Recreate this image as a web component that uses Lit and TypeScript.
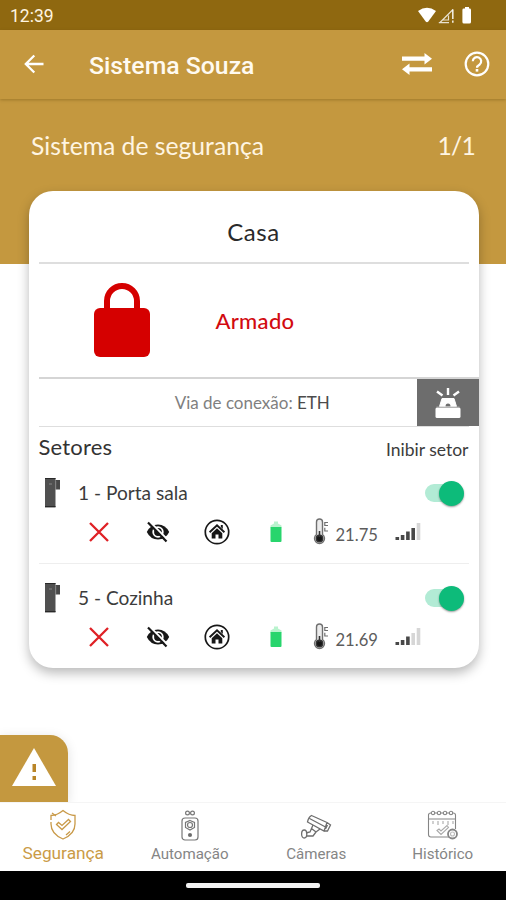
import { LitElement, html, css, svg } from "lit";
import { customElement, property } from "lit/decorators.js";

interface Sector {
  name: string;
  temperature: string;
  signal: number;
}

const SECTORS: Sector[] = [
  { name: "1 - Porta sala", temperature: "21.75", signal: 4 },
  { name: "5 - Cozinha", temperature: "21.69", signal: 3 },
];

@customElement("status-bar")
class StatusBar extends LitElement {
  static styles = css`
    :host { display: flex; height: 30px; box-sizing: border-box; background: #8f6810; color: #fff5e0;
      align-items: center; justify-content: space-between; padding: 0 32px 0 10px;
      font: 400 17.5px/30px Roboto, sans-serif; }
    .time { padding-top: 2px; }
    svg { display: block; }
  `;
  render() {
    return html`<span class="time">12:39</span>
      <svg width="56" height="18" viewBox="0 0 56 18" fill="#fff">
        <path d="M0 5Q9-1.500 18 5L10.300 15.500Q9 17 7.700 15.500Z"/>
        <path d="M22 16.500L35 3.500M20.800 16.700H31M25 14H30.500V9.500" fill="none" stroke="#fff" stroke-opacity=".8" stroke-width="1.200"/>
        <path d="M34 3.500H35.600V13H34zM34 14.500H35.600V16.700H34z" fill-opacity=".85"/>
        <path d="M47 1h4v1.500h.600q1.400 0 1.400 1.400v12q0 1.600-1.600 1.600h-5.400q-1.600 0-1.600-1.600V3.900q0-1.400 1.400-1.400h1.200z"/>
      </svg>`;
  }
}

@customElement("title-bar")
class TitleBar extends LitElement {
  static styles = css`
    :host { display: flex; height: 69px; box-sizing: border-box; align-items: center; background: #c4983f;
      color: #fffaf0; padding: 0 16px 0 23px; box-shadow: 0 1px 3px rgba(90, 60, 0, 0.35); z-index: 1; position: relative; }
    .title { flex: 1; margin: 2px 0 0 44px; font: 500 24.800px/30px Roboto, sans-serif; }
    .help { margin-left: 31px; }
    svg { display: block; margin-top: -1px; }
  `;
  render() {
    return html`
      <svg width="22" height="22" viewBox="0 0 22 22" fill="none" stroke="#fff" stroke-width="2.300">
        <path d="M20.500 11H3M11.300 2.500L2.800 11l8.500 8.500"/>
      </svg>
      <span class="title">Sistema Souza</span>
      <svg width="32" height="24" viewBox="0 0 32 24" fill="#fff">
        <path d="M1 4.500H23.500V1L31 6.700L23.500 12.500V8.800H1z"/>
        <path d="M31 15.200H8.500V11.500L1 17.300L8.500 23V19.500H31z"/>
      </svg>
      <svg class="help" width="26" height="26" viewBox="0 0 26 26" fill="none" stroke="#fff" stroke-width="2.200">
        <circle cx="13" cy="13" r="11.300"/>
        <path d="M8.800 10.300a4.200 4.200 0 1 1 6.900 3.200q-2.700 1.700-2.700 3.200"/>
        <path d="M13 18v2.600" stroke-width="2.600"/>
      </svg>`;
  }
}

@customElement("sector-row")
class SectorRow extends LitElement {
  @property({ attribute: false }) sector: Sector = SECTORS[0];

  static styles = css`
    :host { display: block; height: 96px; padding-top: 9px; box-sizing: border-box; }
    .head { display: flex; height: 36px; align-items: center; padding: 0 14.500px 0 16.500px; }
    .name { flex: 1; margin-left: 17px; font: 400 19.100px/36px Lato, sans-serif; color: #3c3c3c; }
    .switch { position: relative; width: 39px; height: 26px; display: flex; align-items: center; }
    .track { width: 32px; height: 18px; border-radius: 9px; background: #b2ebd5; }
    .thumb { position: absolute; right: 0; top: 0.5px; width: 25px; height: 25px; border-radius: 50%;
      background: #0dbb7a; box-shadow: 0 1px 2px rgba(0, 0, 0, 0.4); }
    .info { display: grid; height: 42px; grid-template-columns: 59px 59px 59px 59px 23px 66px 30px;
      padding-left: 41px; align-items: center; justify-items: center; }
    .temp { justify-self: start; margin: 5px 0 0 7px; font: 400 16.600px/30px Lato, sans-serif; color: #5c5c5c; }
    .thermo { justify-self: end; }
    .signal { justify-self: start; }
    svg { display: block; }
  `;
  render() {
    const bars = [0, 1, 2, 3, 4];
    return html`
      <div class="head">
        <svg width="16" height="30" viewBox="0 0 16 30">
          <path d="M0 0h10.500v29.500H0z" fill="#505050"/>
          <path d="M10.500 2h4.500v9.500h-4.500z" fill="#484848"/>
          <path d="M0 .5h10.500M0 28.500h10.500" stroke="#292929"/>
          <path d="M4 6h3M10.700 3v8" stroke="#858585"/>
        </svg>
        <span class="name">${this.sector.name}</span>
        <span class="switch"><span class="track"></span><span class="thumb"></span></span>
      </div>
      <div class="info">
        <svg width="20" height="20" viewBox="0 0 20 20" fill="none" stroke="#df2025" stroke-width="2.300">
          <path d="M1 1l18 18M19 1L1 19"/>
        </svg>
        <svg width="24" height="22" viewBox="0 0 24 22">
          <path d="M.8 11Q4.500 3.500 12 3.500T23.200 11Q19.500 18.500 12 18.500T.8 11z" fill="#171717"/>
          <circle cx="12" cy="11" r="4.800" fill="none" stroke="#fff" stroke-width="1.800"/>
          <path d="M3.700.7L22 19" stroke="#fff" stroke-width="2"/>
          <path d="M2 1.500L20.500 20.500" stroke="#171717" stroke-width="2.200"/>
        </svg>
        <svg width="26" height="26" viewBox="0 0 26 26">
          <circle cx="13" cy="13" r="11.700" fill="none" stroke="#171717" stroke-width="1.700"/>
          <path d="M5.600 13.300L13 6.200l7.400 7.100" fill="none" stroke="#171717" stroke-width="1.900"/>
          <path d="M16.800 6h2v4l-2-2z" fill="#171717"/>
          <path d="M7.700 14.300L13 9.300l5.300 5V19.600h-3.800v-4h-3v4H7.700z" fill="#171717"/>
        </svg>
        <svg width="12" height="22" viewBox="0 0 12 22">
          <path d="M4 .5h4v2l3.500 2V6.500H.5V4.500L4 2.500z" fill="#b9f3ce"/>
          <path d="M.5 6h11v14q0 1-1 1h-9q-1 0-1-1z" fill="#28d56d"/>
        </svg>
        <svg class="thermo" width="16" height="28" viewBox="0 0 16 28" fill="none" stroke="#707070" stroke-width="1.400">
          <path d="M3.500 16.500V4a3 3 0 0 1 6 0V16.500a5 5 0 1 1-6 0z" fill="#ececec"/>
          <circle cx="6.500" cy="20.500" r="3.200" fill="#151515" stroke="#333"/>
          <path d="M6.500 13v6" stroke="#333" stroke-width="1.600"/>
          <path d="M15 4.500h-3.200v3H15M11.800 9.800V13H15" stroke-width="1.200"/>
        </svg>
        <span class="temp">${this.sector.temperature}</span>
        <svg class="signal" width="26" height="20" viewBox="0 0 26 20">
          ${bars.map((i) => svg`<rect x=${i * 5.3 + 0.5} y=${[15, 13, 9.5, 6, 1][i]} width="3.600"
            height=${[3, 5, 8.5, 12, 17][i]} fill=${i < this.sector.signal ? "#484848" : "#d6d6d6"}></rect>`)}
        </svg>
      </div>`;
  }
}

@customElement("security-card")
class SecurityCard extends LitElement {
  static styles = css`
    :host { display: block; box-sizing: border-box; height: 477px; margin: 0 27.500px 0 28.500px; background: #fff;
      border-radius: 24px; box-shadow: 0 5px 12px rgba(0, 0, 0, 0.28); font-family: Lato, sans-serif; }
    .title { height: 71px; margin: 0 10px; border-bottom: 2px solid #dedede; text-align: center;
      font-size: 24px; line-height: 82px; letter-spacing: 0.6px; color: #2a2a2a; }
    .state { height: 113px; display: grid; grid-template-columns: 187px 1fr; align-items: center; }
    .lock { justify-self: center; margin-top: -1px; }
    .armed { font-size: 22px; font-weight: 500; letter-spacing: 0.3px; color: #d20a10; margin-top: -1px; }
    .link { height: 47px; margin-left: 10px; border-top: 2px solid #d5d5d5; display: flex; position: relative; }
    .via { flex: 1; text-align: center; font-size: 17px; line-height: 48px; color: #808080; padding-left: 49px; }
    .eth { color: #4c4c4c; }
    .siren { width: 61.500px; background: #6d6d6d; display: grid; place-items: center; }
    .heading { height: 39px; margin: 0 10px; border-top: 1px solid #dedede; display: flex;
      justify-content: space-between; color: #3c3c3c; }
    .sectors { font-size: 22px; line-height: 39px; letter-spacing: 0.2px; color: #333; }
    .inhibit { font-size: 17.500px; line-height: 45px; }
    .divider { height: 1px; margin: 1px 10px 7px; background: #eee; }
    svg { display: block; }
  `;
  render() {
    return html`
      <div class="title">Casa</div>
      <div class="state">
        <svg class="lock" width="58" height="76" viewBox="0 0 58 76">
          <path d="M14 28V19a15 15 0 0 1 30 0v9" fill="none" stroke="#d50000" stroke-width="6"/>
          <rect x="1" y="26" width="56" height="49" rx="6" fill="#d50000"/>
        </svg>
        <span class="armed">Armado</span>
      </div>
      <div class="link">
        <span class="via">Via de conexão: <span class="eth">ETH</span></span>
        <span class="siren">
          <svg width="28" height="32" viewBox="0 0 28 32">
            <path d="M14 1v7M3 4.500l5.500 4M25 4.500l-5.500 4" stroke="#fff" stroke-width="2.400"/>
            <path d="M8 11.500h12l2.500 8h-17z" fill="#fff" stroke="#fff" stroke-width="1" stroke-linejoin="round"/>
            <rect x="1.500" y="20.500" width="25" height="10.500" rx="1.500" fill="#fff"/>
            <path d="M11.500 19.500q0-3 2.500-3t2.500 3z" fill="#6d6d6d"/>
            <path d="M2.500 20H25.500" stroke="#b5b5b5" stroke-width=".8"/>
          </svg>
        </span>
      </div>
      <div class="heading"><span class="sectors">Setores</span><span class="inhibit">Inibir setor</span></div>
      <sector-row .sector=${SECTORS[0]}></sector-row>
      <div class="divider"></div>
      <sector-row .sector=${SECTORS[1]}></sector-row>`;
  }
}

@customElement("bottom-tabs")
class BottomTabs extends LitElement {
  static styles = css`
    :host { display: grid; grid-template-columns: repeat(4, 1fr); height: 69px; box-sizing: border-box; background: #fff;
      border-top: 1px solid #f5f5f5; font: 400 15.100px/20px Roboto, sans-serif; color: #858585; }
    .tab { display: flex; flex-direction: column; align-items: center; padding-top: 6px; }
    .tab svg { display: block; height: 32px; }
    .label { margin-top: 3px; }
    .active .label { font-size: 17.300px; color: #ca9b47; margin-top: 2px; }
  `;
  render() {
    return html`
      <div class="tab active">
        <svg width="28" height="32" viewBox="0 0 28 32" fill="none" stroke="#c99a49" stroke-width="1.300">
          <path d="M2 11V6.500Q8 6.500 14 1.500Q20 6.500 26 6.500V15Q26 25 14 30Q2 25 2 15V13"/>
          <path d="M17 26l4-3.500M3 4l4 3" />
          <path d="M7.500 15.500l2-2 3.500 3 6.500-6 2 2-8.500 8z"/>
        </svg><span class="label">Segurança</span>
      </div>
      <div class="tab">
        <svg width="20" height="32" viewBox="0 0 20 32" fill="none" stroke="#777" stroke-width="1.200">
          <circle cx="7.500" cy="4" r="1.900"/><circle cx="12.500" cy="4" r="1.900"/>
          <rect x="2" y="9" width="16" height="22" rx="3"/>
          <path d="M10 11.500l4.500 2v5L10 21l-4.500-2.500v-5z"/>
          <circle cx="10" cy="16" r="2.500"/><circle cx="10" cy="26" r="1.500" fill="#666"/>
        </svg><span class="label">Automação</span>
      </div>
      <div class="tab">
        <svg width="32" height="32" viewBox="0 0 32 32" fill="none" stroke="#6e6e6e" stroke-width="1.300">
          <path d="M11.500 6.500L27 13.500 24 22 7.500 13q1-5 4-6.500zM9.500 9.500l16 8.500M27 13.500l3.500 2.500-3 6-3.500 0M27.500 16l-2 4"/>
          <path d="M13 16l-1.500 3.500 4.500 3.500 4-3M11.500 19.500L10 23l-4 1M16 23l-3 4H6"/>
          <ellipse cx="4.200" cy="25" rx="2.600" ry="4"/>
        </svg><span class="label">Câmeras</span>
      </div>
      <div class="tab">
        <svg width="32" height="32" viewBox="0 0 32 32" fill="none" stroke="#858585" stroke-width="1.100">
          <path d="M22 28H4q-2.500 0-2.500-2.500V6Q1.500 4 4 4H26q2.500 0 2.500 2V20M1.500 10H28.500" />
          <path d="M6 12v3M11 12v4M16 12v3M21 12v4M26 12v3" stroke="#aaa"/>
          <g fill="#fff"><circle cx="6" cy="4" r="1.700"/><circle cx="12" cy="4" r="1.700"/><circle cx="18" cy="4" r="1.700"/><circle cx="24" cy="4" r="1.700"/></g>
          <path d="M10 21.500l2-1.500 2 2 6-5.500 1.500 2-7.500 7z" stroke="#aaa"/>
          <circle cx="25.500" cy="25" r="4.500" stroke-width="1.800" fill="#fff"/><circle cx="25.500" cy="25" r="2" stroke="#bbb"/>
        </svg><span class="label">Histórico</span>
      </div>`;
  }
}

@customElement("app-root")
class AppRoot extends LitElement {
  static styles = css`
    :host { display: flex; flex-direction: column; width: 506px; height: 900px; overflow: hidden; background: #fff; }
    .page { flex: 1; background: linear-gradient(#c4983f 165px, #fff 165px); display: flex; flex-direction: column; }
    .hero { height: 92px; display: flex; box-sizing: border-box; justify-content: space-between; padding: 0 31px;
      font: 400 24.700px/93px Lato, sans-serif; color: #fff5e2; }
    .count { letter-spacing: -0.8px; }
    .alert { margin-top: auto; width: 68px; height: 67px; background: #c4983f; border-radius: 0 18px 0 0;
      display: grid; place-items: center; box-shadow: 0 2px 12px rgba(0, 0, 0, 0.12); }
    .alert svg { margin-top: -3px; }
    .gesture { height: 29px; background: #000; display: grid; place-items: center; }
    .pill { width: 134px; height: 5px; border-radius: 2px; background: #f2f2f2; }
    bottom-tabs { position: relative; }
  `;
  render() {
    return html`
      <status-bar></status-bar>
      <title-bar></title-bar>
      <div class="page">
        <div class="hero"><span>Sistema de segurança</span><span class="count">1/1</span></div>
        <security-card></security-card>
        <div class="alert">
          <svg width="44" height="38" viewBox="0 0 44 38">
            <path d="M22 0L44 38H0z" fill="#fff"/>
            <path d="M20.500 16h3.500v8h-3.500zM20.500 28h3.500v4h-3.500z" fill="#b98528"/>
          </svg>
        </div>
      </div>
      <bottom-tabs></bottom-tabs>
      <div class="gesture"><span class="pill"></span></div>`;
  }
}
